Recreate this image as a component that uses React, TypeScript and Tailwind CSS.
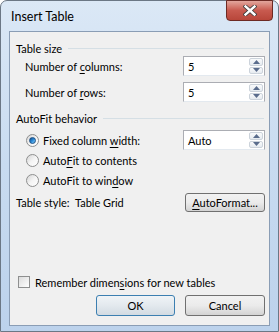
import type { ReactNode } from "react";

const font = "font-['Lato','Segoe_UI',sans-serif] text-[11px] leading-none";

function GroupHeader({ label, className = "" }: { label: string; className?: string }) {
  return (
    <div className={`flex items-center h-[16px] ${className}`}>
      <span className="whitespace-nowrap">{label}</span>
      <div className="flex-1 ml-[6px] mr-[1px] border-t border-[#d5dfe5] border-b-white h-0"></div>
    </div>
  );
}

function SpinBox({ value }: { value: string }) {
  return (
    <div className="flex w-[82px] h-[20px] border border-[#abadb3] border-b-[#e3e9ef] bg-white">
      <div className="flex-1 flex items-center pl-[4px] text-black">{value}</div>
      <div className="w-[16px] flex flex-col gap-[1px] p-[1px] bg-white">
        <div className="flex-1 flex items-center justify-center rounded-[2px] border border-[#ccd3db] bg-gradient-to-b from-[#f9fafb] to-[#e6ebf0]">
          <svg width="7" height="4" viewBox="0 0 7 4">
            <path d="M0 4 L3.5 0 L7 4 Z" fill="#5a6c8c" />
          </svg>
        </div>
        <div className="flex-1 flex items-center justify-center rounded-[2px] border border-[#ccd3db] bg-gradient-to-b from-[#f9fafb] to-[#e6ebf0]">
          <svg width="7" height="4" viewBox="0 0 7 4">
            <path d="M0 0 L3.5 4 L7 0 Z" fill="#5a6c8c" />
          </svg>
        </div>
      </div>
    </div>
  );
}

function Radio({ checked, children }: { checked?: boolean; children: ReactNode }) {
  return (
    <div className="flex items-center ml-[10px]">
      <div className="w-[13px] h-[13px] rounded-full border border-[#8e8f8f] bg-gradient-to-br from-[#d4d4d4] via-[#f4f4f4] to-white flex items-center justify-center">
        {checked && (
          <div className="w-[7px] h-[7px] rounded-full bg-gradient-to-br from-[#0c4a8a] via-[#2c8ad6] to-[#7fd0ff] border border-[#1b4f85]"></div>
        )}
      </div>
      <span className="ml-[4px]">{children}</span>
    </div>
  );
}

function Button({ children, primary, className = "" }: { children: ReactNode; primary?: boolean; className?: string }) {
  return (
    <div
      className={`flex items-center justify-center rounded-[3px] border ${
        primary
          ? "border-[#3c7fb1] bg-gradient-to-b from-[#f0f4f7] via-[#e3e9ee] to-[#d2dbe2]"
          : "border-[#707070] bg-gradient-to-b from-[#f2f2f2] via-[#ebebeb] to-[#d3d3d3]"
      } ${className}`}
    >
      {children}
    </div>
  );
}

export default function App() {
  return (
    <div className={`w-[279px] h-[332px] ${font} text-black overflow-hidden bg-white`}>
      <div className="relative w-full h-full flex flex-col rounded-t-[7px] border border-[#6b7785] bg-gradient-to-b from-[#dbe8f6] via-[#c8dbf0] to-[#bcd2ec]">
        <div className="h-[30px] flex items-center pl-[10px] pt-[3px] text-[12.5px]">Insert Table</div>
        <div className="absolute right-[5px] -top-[1px] w-[47px] h-[21px] rounded-b-[4px] border border-[#6d2a24] bg-gradient-to-b from-[#e2a69d] via-[#c85a4f] to-[#b8463a] flex items-center justify-center">
          <svg width="14" height="11" viewBox="0 0 14 11">
            <path d="M2.5 1.5 L11.5 9.5 M11.5 1.5 L2.5 9.5" stroke="#3b3b3b" strokeWidth="4" strokeLinecap="square" />
            <path d="M2.5 1.5 L11.5 9.5 M11.5 1.5 L2.5 9.5" stroke="#ffffff" strokeWidth="2.4" strokeLinecap="square" />
          </svg>
        </div>
        <div className="mx-[8px] mb-[5px] flex-1 flex flex-col border border-[#8a9db5] bg-[#f0f0f0] pl-[6px] pr-[4px] pb-[9px]">
          <GroupHeader label="Table size" className="mt-[8px]" />
          <div className="flex items-center justify-between h-[20px]">
            <span className="ml-[9px]">
              Number of <u className="underline-offset-2">c</u>olumns:
            </span>
            <SpinBox value="5" />
          </div>
          <div className="flex items-center justify-between h-[20px] mt-[6px]">
            <span className="ml-[9px]">
              Number of <u className="underline-offset-2">r</u>ows:
            </span>
            <SpinBox value="5" />
          </div>
          <GroupHeader label="AutoFit behavior" className="mt-[8px]" />
          <div className="flex items-center justify-between h-[20px] mt-[4px]">
            <Radio checked>
              Fixed column <u className="underline-offset-2">w</u>idth:
            </Radio>
            <SpinBox value="Auto" />
          </div>
          <div className="flex items-center h-[20px]">
            <Radio>
              Auto<u className="underline-offset-2">F</u>it to contents
            </Radio>
          </div>
          <div className="flex items-center h-[20px]">
            <Radio>
              AutoFit to win<u className="underline-offset-2">d</u>ow
            </Radio>
          </div>
          <div className="flex items-center justify-between h-[20px] mt-[2px]">
            <span>Table style:&nbsp; Table Grid</span>
            <Button className="w-[80px] h-[19px]">
              <span>
                <u className="underline-offset-2">A</u>utoFormat...
              </span>
            </Button>
          </div>
          <div className="flex-1"></div>
          <div className="flex items-center h-[14px] ml-[2px]">
            <div className="w-[12px] h-[12px] border border-[#8e8f8f] bg-gradient-to-br from-[#dcdcdc] to-white"></div>
            <span className="ml-[5px]">
              Remember dimen<u className="underline-offset-2">s</u>ions for new tables
            </span>
          </div>
          <div className="flex justify-end gap-[10px] mt-[6px]">
            <Button primary className="w-[79px] h-[21px]">
              OK
            </Button>
            <Button className="w-[80px] h-[21px]">Cancel</Button>
          </div>
        </div>
      </div>
    </div>
  );
}
